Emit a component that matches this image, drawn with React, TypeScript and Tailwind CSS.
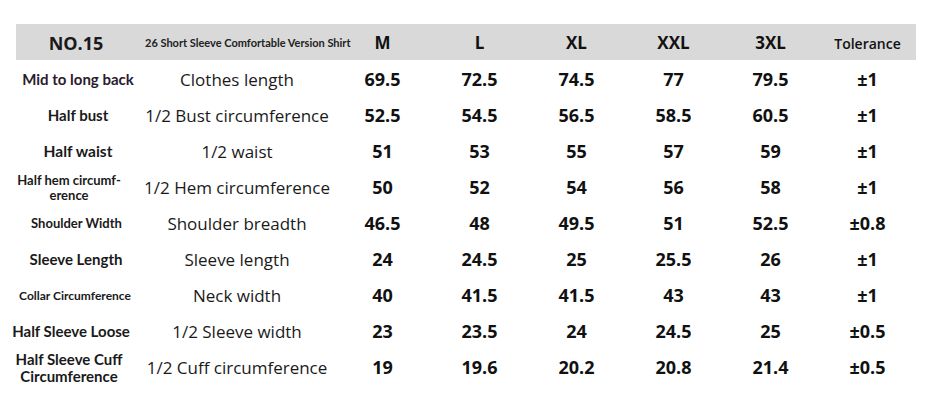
import React from "react";

type Row = {
  label: string[];
  labelCls: string;
  labelPad: string;
  desc: string;
  vals: string[];
  tol: string;
};

const rows: Row[] = [
  { label: ["Mid to long back"], labelCls: "text-[15px] text-[#2a1b2c]", labelPad: "pl-[0px]", desc: "Clothes length", vals: ["69.5", "72.5", "74.5", "77", "79.5"], tol: "±1" },
  { label: ["Half bust"], labelCls: "text-[15px]", labelPad: "pl-[0px]", desc: "1/2 Bust circumference", vals: ["52.5", "54.5", "56.5", "58.5", "60.5"], tol: "±1" },
  { label: ["Half waist"], labelCls: "text-[15.5px]", labelPad: "pl-[0px]", desc: "1/2 waist", vals: ["51", "53", "55", "57", "59"], tol: "±1" },
  { label: ["Half hem circumf-", "erence"], labelCls: "text-[13px] leading-[15px]", labelPad: "pr-[18px]", desc: "1/2 Hem circumference", vals: ["50", "52", "54", "56", "58"], tol: "±1" },
  { label: ["Shoulder Width"], labelCls: "text-[13px]", labelPad: "pr-[3px]", desc: "Shoulder breadth", vals: ["46.5", "48", "49.5", "51", "52.5"], tol: "±0.8" },
  { label: ["Sleeve Length"], labelCls: "text-[15px]", labelPad: "pr-[4px]", desc: "Sleeve length", vals: ["24", "24.5", "25", "25.5", "26"], tol: "±1" },
  { label: ["Collar Circumference"], labelCls: "text-[12px]", labelPad: "pr-[6px]", desc: "Neck width", vals: ["40", "41.5", "41.5", "43", "43"], tol: "±1" },
  { label: ["Half Sleeve Loose"], labelCls: "text-[15px]", labelPad: "pr-[14px]", desc: "1/2 Sleeve width", vals: ["23", "23.5", "24", "24.5", "25"], tol: "±0.5" },
  { label: ["Half Sleeve Cuff", "Circumference"], labelCls: "text-[15px] leading-[17px]", labelPad: "pr-[18px]", desc: "1/2 Cuff circumference", vals: ["19", "19.6", "20.2", "20.8", "21.4"], tol: "±0.5" },
];

const sizes = ["M", "L", "XL", "XXL", "3XL"];

export default function App() {
  return (
    <div className="w-[932px] h-[401px] bg-white pt-[24px] pl-[16px] text-[#111]" style={{ fontFamily: "'Open Sans', 'Noto Sans', sans-serif" }}>
      <div className="grid grid-cols-[124px_194px_97px_97px_97px_97px_97px_97px] w-[900px]">
        {/* header */}
        <div className="h-[36px] bg-[#d9d9d9] flex items-center justify-center pt-[2px] pr-[4px]">
          <span className="text-[18px] font-bold text-[#1a1a1a]">NO.15</span>
        </div>
        <div className="h-[36px] bg-[#d9d9d9] flex items-center justify-start pl-[5px] pt-[2px]">
          <span className="relative z-10 text-[11px] font-bold tracking-[0px] text-[#222] whitespace-nowrap" style={{ fontFamily: "Lato, sans-serif" }}>
            26 Short Sleeve Comfortable Version Shirt
          </span>
        </div>
        {sizes.map((s) => (
          <div key={s} className="h-[36px] bg-[#d9d9d9] flex items-center justify-center pt-[2px]">
            <span className="text-[17px] font-bold text-[#111]">{s}</span>
          </div>
        ))}
        <div className="h-[36px] bg-[#d9d9d9] flex items-center justify-center pt-[2px]">
          <span className="text-[14px] font-semibold text-[#111]">Tolerance</span>
        </div>

        {rows.map((r, i) => (
          <React.Fragment key={i}>
            <div className={`h-[36px] flex flex-col items-center justify-center text-center pt-[3px] ${r.labelPad}`}>
              {r.label.map((l, j) => (
                <span key={j} className={`font-bold whitespace-nowrap text-[#1a1a1a] ${r.labelCls}`} style={{ fontFamily: "Lato, sans-serif" }}>
                  {l}
                </span>
              ))}
            </div>
            <div className="h-[36px] flex items-center justify-center pt-[3px]">
              <span className="text-[17px] text-[#1a1a1a] whitespace-nowrap">{r.desc}</span>
            </div>
            {r.vals.map((v, k) => (
              <div key={k} className="h-[36px] flex items-center justify-center pt-[3px]">
                <span className="text-[18px] font-bold text-[#111]">{v}</span>
              </div>
            ))}
            <div className="h-[36px] flex items-center justify-center pt-[3px]">
              <span className="text-[18px] font-bold text-[#111]">{r.tol}</span>
            </div>
          </React.Fragment>
        ))}
      </div>
    </div>
  );
}
